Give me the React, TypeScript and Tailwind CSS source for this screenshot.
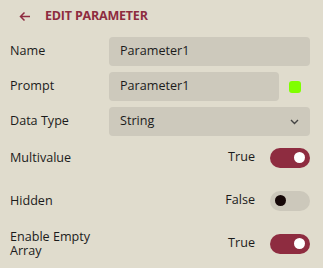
import React from "react";

function Toggle({ on }: { on: boolean }) {
  return (
    <div
      className={
        "w-[40px] h-[20px] rounded-full flex items-center px-[5px] " +
        (on ? "bg-[#8e2c40] justify-end" : "bg-[#ccc8bb] justify-start")
      }
    >
      <div
        className={
          "w-[11px] h-[11px] rounded-full " + (on ? "bg-white" : "bg-[#160808]")
        }
      />
    </div>
  );
}

export default function App() {
  const font = { fontFamily: '"Open Sans", "Noto Sans", sans-serif' };
  return (
    <div
      className="w-[323px] h-[268px] bg-[#e0dccd] text-[#1b1b1b] text-[12.6px] pl-[10px] pr-[13px] overflow-hidden"
      style={font}
    >
      <div className="h-[33px] flex items-center pl-[9px] gap-[14px] text-[#8e2c40]">
        <svg width="12" height="11" viewBox="0 0 12 11" fill="none" stroke="currentColor" strokeWidth="1.5">
          <path d="M11 5.5H1.5M5.5 1.5L1.5 5.5l4 4" />
        </svg>
        <span className="font-bold text-[12.5px] tracking-[-0.2px]">EDIT PARAMETER</span>
      </div>
      <div className="mt-[4px] flex flex-col gap-[6px]">
        <div className="flex items-center h-[29px]">
          <div className="w-[99px] shrink-0">Name</div>
          <div className="flex-1 h-full rounded-[4px] bg-[#cdc9bc] flex items-center pl-[11px]">Parameter1</div>
        </div>
        <div className="flex items-center h-[29px]">
          <div className="w-[99px] shrink-0">Prompt</div>
          <div className="flex-1 h-full rounded-[4px] bg-[#cdc9bc] flex items-center pl-[11px]">Parameter1</div>
          <div className="w-[31px] flex justify-center shrink-0">
            <div className="w-[12px] h-[12px] rounded-[3px] bg-[#7fff00]" />
          </div>
        </div>
        <div className="flex items-center h-[29px]">
          <div className="w-[99px] shrink-0">Data Type</div>
          <div className="flex-1 h-full rounded-[4px] bg-[#cdc9bc] flex items-center justify-between pl-[11px] pr-[11px]">
            <span>String</span>
            <svg width="9" height="6" viewBox="0 0 9 6" fill="none" stroke="#444" strokeWidth="1.4">
              <path d="M1 1l3.5 3.5L8 1" />
            </svg>
          </div>
        </div>
      </div>
      <div className="flex flex-col">
        {[
          { label: "Multivalue", on: true },
          { label: "Hidden", on: false },
          { label: "Enable Empty Array", on: true },
        ].map((r) => (
          <div key={r.label} className="h-[43px] flex items-center">
            <div className="w-[92px] shrink-0 leading-[14px]">{r.label}</div>
            <div className="flex-1 flex items-center justify-end gap-[15px]">
              <span>{r.on ? "True" : "False"}</span>
              <Toggle on={r.on} />
            </div>
          </div>
        ))}
      </div>
    </div>
  );
}
